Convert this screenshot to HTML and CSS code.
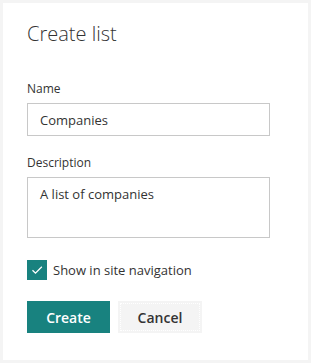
FILE: index.html
```html
<!DOCTYPE html>
<html lang="en">
<head>
    <meta charset="UTF-8">
    <meta name="viewport" content="width=device-width, initial-scale=1.0">
    <title>Create list</title>
    <link rel="stylesheet" href="styles.css">
</head>
<body>
    <div class="panel">
        <h1 class="title">Create list</h1>

        <div class="field">
            <label class="label" for="name">Name</label>
            <input class="input" id="name" type="text" value="Companies">
        </div>

        <div class="field">
            <label class="label" for="desc">Description</label>
            <textarea class="input textarea" id="desc">A list of companies</textarea>
        </div>

        <label class="check">
            <span class="box">
                <svg width="20" height="20" viewBox="0 0 20 20">
                    <path d="M5.5 10.2 L8.5 13.2 L14.8 6.8" fill="none" stroke="#fff" stroke-width="1.3"/>
                </svg>
            </span>
            <span>Show in site navigation</span>
        </label>

        <div class="actions">
            <button class="btn primary">Create</button>
            <button class="btn secondary">Cancel</button>
        </div>
    </div>
</body>
</html>
```

FILE: styles.css
```css
body {
    margin: 0;
    padding: 3px;
    background-color: #f4f4f4;
    font-family: "Open Sans", "Noto Sans", sans-serif;
    color: #333;
}
.panel {
    background-color: #fff;
    height: 357px;
    box-sizing: border-box;
    padding: 17px 38px 0 24px;
    display: flex;
    flex-direction: column;
}
.title {
    margin: 0 0 33px;
    font-size: 20px;
    font-weight: 300;
    line-height: 28px;
    color: #333;
}
.field {
    display: flex;
    flex-direction: column;
    margin-bottom: 19px;
}
.label {
    font-size: 12px;
    line-height: 16px;
    color: #333;
    margin-bottom: 6px;
}
.input {
    height: 33px;
    box-sizing: border-box;
    border: 1px solid #c8c8c8;
    padding: 1px 12px 0;
    font-family: inherit;
    font-size: 13px;
    color: #333;
    outline: none;
}
.textarea {
    height: 61px;
    padding: 7px 12px;
    line-height: 18px;
    resize: none;
}
.field + .check {
    margin-top: 3px;
}
.check {
    display: flex;
    align-items: center;
    gap: 6px;
    font-size: 13px;
    line-height: 20px;
    color: #333;
}
.box {
    width: 20px;
    height: 20px;
    background-color: #18827f;
    display: flex;
}
.actions {
    display: flex;
    gap: 8px;
    margin-top: 21px;
}
.btn {
    height: 32px;
    border: none;
    font-family: inherit;
    font-size: 14px;
    font-weight: 600;
    padding: 0;
}
.primary {
    width: 83px;
    background-color: #18827f;
    color: #fff;
}
.secondary {
    width: 84px;
    background-color: #f4f4f4;
    color: #333;
    outline: 1px dotted #fff;
    outline-offset: -3px;
}
```
